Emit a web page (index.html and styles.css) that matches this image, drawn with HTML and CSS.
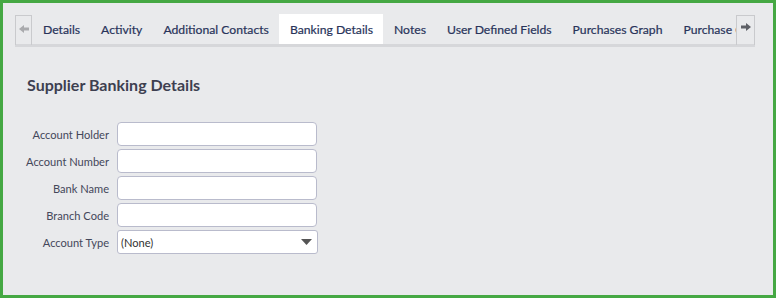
FILE: index.html
```html
<!DOCTYPE html>
<html>
  <head>
    <title>Supplier Banking Details</title>
    <link rel="stylesheet" href="styles.css">
  </head>
  <body>
    <div class="frame">
      <div class="tabstrip">
        <div class="scroll-btn">
          <svg width="10" height="10" viewBox="0 0 10 10"><path d="M0 5 L5 1 L5 3.5 L10 3.5 L10 6.5 L5 6.5 L5 9 Z" fill="#a9aaad"/></svg>
        </div>
        <div class="tabs">
          <div class="tab">Details</div>
          <div class="tab">Activity</div>
          <div class="tab">Additional Contacts</div>
          <div class="tab active">Banking Details</div>
          <div class="tab">Notes</div>
          <div class="tab">User Defined Fields</div>
          <div class="tab">Purchases Graph</div>
          <div class="tab">Purchase Orders</div>
        </div>
        <div class="scroll-btn right">
          <svg width="10" height="10" viewBox="0 0 10 10"><path d="M10 5 L5 1 L5 3.5 L0 3.5 L0 6.5 L5 6.5 L5 9 Z" fill="#5e6066"/></svg>
        </div>
      </div>
      <div class="panel">
        <h2>Supplier Banking Details</h2>
        <form class="bank-form">
          <label for="holder">Account Holder</label>
          <input type="text" id="holder">
          <label for="number">Account Number</label>
          <input type="text" id="number">
          <label for="bank">Bank Name</label>
          <input type="text" id="bank">
          <label for="branch">Branch Code</label>
          <input type="text" id="branch">
          <label for="type">Account Type</label>
          <div class="select" id="type">
            <span>(None)</span>
            <svg width="11" height="6" viewBox="0 0 11 6"><path d="M0 0 L11 0 L5.5 6 Z" fill="#555"/></svg>
          </div>
        </form>
      </div>
    </div>
  </body>
</html>
```

FILE: styles.css
```css
html, body {
  margin: 0;
  height: 100%;
}
body {
  font-family: Lato, 'Open Sans', sans-serif;
  background-color: #e9eaec;
}
.frame {
  box-sizing: border-box;
  height: 298px;
  width: 776px;
  border: 3px solid #45a843;
  background-color: #e9eaec;
  padding: 11px 18px 0 12px;
}
.tabstrip {
  display: flex;
  height: 33px;
  border-bottom: 3px solid #d6d7da;
  box-sizing: border-box;
}
.scroll-btn {
  width: 17px;
  height: 30px;
  margin-top: 1px;
  border: 1px solid #c9cacd;
  border-bottom: none;
  box-sizing: border-box;
  display: flex;
  justify-content: center;
  padding-top: 8px;
  flex-shrink: 0;
}
.scroll-btn.right {
  width: 19px;
  padding-top: 6px;
}
.tabs {
  display: flex;
  flex: 1;
  overflow: hidden;
  white-space: nowrap;
}
.tab {
  font-size: 12.2px;
  color: #28335a;
  padding: 8px 10px 0 11px;
  height: 30px;
  box-sizing: border-box;
  flex-shrink: 0;
  -webkit-text-stroke: 0.2px #28335a;
}
.tab.active {
  background-color: #fff;
  height: 33px;
  border-bottom: 3px solid #2c5ec1;
}
.panel {
  padding: 0 0 0 12px;
}
h2 {
  font-size: 16px;
  font-weight: bold;
  color: #3d3f50;
  margin: 28px 0 0 0;
  height: 20px;
}
.bank-form {
  display: grid;
  grid-template-columns: 90px 201px;
  column-gap: 8px;
  row-gap: 3px;
  margin: 27px 0 0 -8px;
  align-items: center;
}
label {
  font-size: 11.1px;
  color: #44475a;
  text-align: right;
  white-space: nowrap;
}
input[type="text"] {
  height: 24px;
  width: 200px;
  box-sizing: border-box;
  border: 1px solid #b9bbcc;
  border-radius: 4px;
  background-color: #fff;
  margin: 0;
}
.select {
  height: 24px;
  width: 201px;
  box-sizing: border-box;
  border: 1px solid #b9bbcc;
  border-radius: 3px;
  background-color: #fff;
  display: flex;
  align-items: center;
  justify-content: space-between;
  padding: 0 5px 0 3px;
  font-size: 11.1px;
  color: #333;
}
```
